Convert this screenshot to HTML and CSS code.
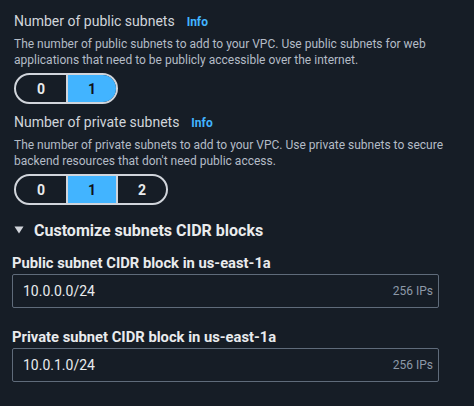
FILE: index.html
```html
<!DOCTYPE html>
<html>
<head>
<meta charset="utf-8">
<link rel="stylesheet" href="styles.css">
</head>
<body>
<div class="page">
  <section class="field">
    <div class="label-row"><span class="label">Number of public subnets</span><a class="info">Info</a></div>
    <p class="desc">The number of public subnets to add to your VPC. Use public subnets for web applications that need to be publicly accessible over the internet.</p>
    <div class="seg">
      <button class="opt">0</button>
      <button class="opt on">1</button>
    </div>
  </section>
  <section class="field">
    <div class="label-row"><span class="label">Number of private subnets</span><a class="info">Info</a></div>
    <p class="desc">The number of private subnets to add to your VPC. Use private subnets to secure backend resources that don't need public access.</p>
    <div class="seg">
      <button class="opt">0</button>
      <button class="opt on">1</button>
      <button class="opt">2</button>
    </div>
  </section>
  <div class="expander">
    <svg class="caret" width="10" height="8" viewBox="0 0 10 8"><path d="M0.5 0.5 H9.5 L5 7.5 Z" fill="#d1d5db"/></svg>
    <span>Customize subnets CIDR blocks</span>
  </div>
  <div class="cidr">
    <div class="cidr-label">Public subnet CIDR block in us-east-1a</div>
    <div class="input"><span class="val">10.0.0.0/24</span><span class="ips">256 IPs</span></div>
  </div>
  <div class="cidr cidr-2">
    <div class="cidr-label">Private subnet CIDR block in us-east-1a</div>
    <div class="input"><span class="val">10.0.1.0/24</span><span class="ips">256 IPs</span></div>
  </div>
</div>
</body>
</html>
```
FILE: styles.css
```css
html, body { margin: 0; padding: 0; background: #161d26; }
body { font-family: Roboto, "Open Sans", sans-serif; color: #d1d5db; width: 474px; height: 406px; overflow: hidden; }
.page { padding: 13px 20px 0 14px; }
.field { margin-bottom: 10px; }
.label-row { display: flex; align-items: baseline; gap: 12px; height: 20px; }
.label { font-size: 14px; color: #d1d5db; }
.info { font-size: 12px; font-weight: 700; color: #42b4ff; }
.desc { margin: 3px 0 5px; font-size: 12px; line-height: 16px; color: #b4bcc6; width: 445px; }
.seg { display: inline-flex; border: 2px solid #d1d5db; border-radius: 16px; overflow: hidden; height: 27px; }
.opt { width: 50px; border: none; background: transparent; color: #e9ebed; font-family: inherit; font-size: 14px; font-weight: 700; padding: 0; }
.opt + .opt { border-left: 2px solid #d1d5db; }
.opt.on { background: #42b4ff; color: #0f141a; }
.expander { display: flex; align-items: center; gap: 10px; margin-top: 15px; font-size: 16px; font-weight: 700; color: #e9ebed; height: 20px; }
.caret { flex: none; }
.cidr { margin-top: 14px; margin-left: -2px; }
.cidr-2 { margin-top: 20px; }
.cidr-label { font-size: 14.75px; font-weight: 700; color: #e9ebed; height: 20px; margin-bottom: 0; }
.input { box-sizing: border-box; width: 427px; height: 34px; border: 1px solid #5f6b7a; border-radius: 2px; display: flex; align-items: center; justify-content: space-between; padding: 0 5px 0 10px; }
.val { font-size: 14px; color: #e9ebed; }
.ips { font-size: 12px; color: #8d99a8; }
```
